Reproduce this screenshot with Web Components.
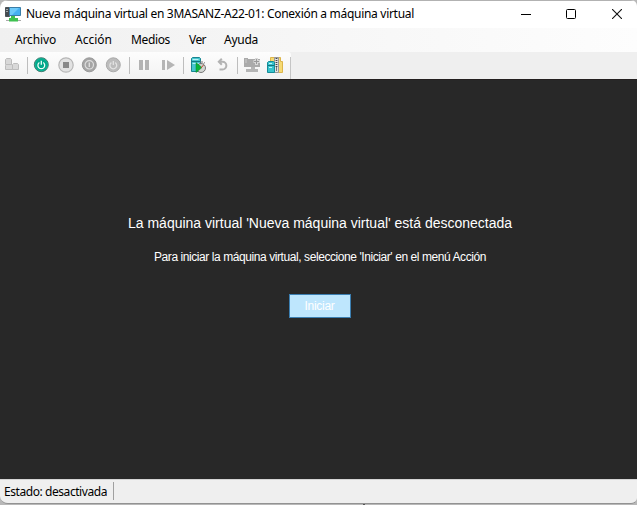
<!DOCTYPE html>
<html lang="es"><head><meta charset="utf-8"><title>Conexión a máquina virtual</title>
<style>html,body{margin:0;height:100%;overflow:hidden;background:#b5b5b5}</style></head><body>
<vm-window></vm-window>
<script>
const define=(name,html,ready)=>customElements.define(name,class extends HTMLElement{
 connectedCallback(){ if(!this.shadowRoot)this.attachShadow({mode:'open'}).innerHTML=html; if(ready)ready(this); }
});

/* A line of text spread evenly over the width given in its "w" attribute. */
define('fit-text','<style>:host{display:block;white-space:pre;flex:none}span{display:inline-block}</style><span><slot></slot></span>',el=>{
 const s=el.shadowRoot.querySelector('span'),w=+el.getAttribute('w'),n=el.textContent.length;
 s.style.letterSpacing='0';
 s.style.letterSpacing=((w-s.getBoundingClientRect().width)/n)+'px';
 el.style.width=w+'px';
});

const power='<path d="M6.1 5.3a3.4 3.4 0 1 0 3.8 0M8 3.6v4" fill="none" stroke="#S" stroke-width="1.3"/>';
const server='<path d="M1.5 1.5l1-1h7l1 1v13h-9z" fill="#45c5ce" stroke="#198591"/><path d="M2.5 2.5h6M2.5 6.5h7" stroke="#b5f2f4"/><path d="M2 4.5h8" stroke="#167984"/>';
const icons={
 keys:'<path d="M1.5 2.5l1-1h4l1 1v5h-6zM1.5 8.5l1-1h5l1 1v4h-7zM8.5 7.5l1-1h4l1 1v5h-6z" fill="#d8d8d8" stroke="#bcbcbc"/>',
 start:'<circle cx="8.3" cy="7.7" r="7" fill="#00a88a" stroke="#477b70"/><circle cx="8.3" cy="7.7" r="6" fill="none" stroke="#12b99a" stroke-width=".8"/><g transform="translate(.3 .2)">'+power.replace('#S','#f1fffb')+'</g>',
 off:'<circle cx="8" cy="8" r="7.2" fill="#e2e2e2" stroke="#b7b7b7" stroke-width="1.2"/><path d="M5 5h6v6H5z" fill="#888"/>',
 shut:'<circle cx="8.3" cy="7.8" r="7" fill="#a5a5a5" stroke="#999"/><circle cx="8.3" cy="7.8" r="4.2" fill="none" stroke="#dedede" stroke-width="1.2"/><path d="M8.3 5.6v4.5" stroke="#dedede" stroke-width="1.4"/>',
 save:'<circle cx="8.3" cy="7.8" r="7" fill="#bcbcbc" stroke="#aaa"/><g transform="translate(.3 .3)">'+power.replace('#S','#e3e3e3')+'</g>',
 pause:'<path d="M3 3h4v10H3zM9 3h4v10H9z" fill="#b3b3b3"/>',
 reset:'<path d="M2 3h3v10H2zM7 3l8 5-8 5z" fill="#b5b5b5"/>',
 check:server+'<circle cx="11" cy="11" r="4.5" fill="#d2d5d2" stroke="#777"/><path d="M10 5h3M13.5 6.5l1.5-1" stroke="#777"/><path d="M6 5.5l6 5-6 5z" fill="#08b43a" stroke="#08882c" stroke-width=".5"/><path d="M11 11l2.5-3" stroke="#bb4a2e"/>',
 revert:'<path d="M4.5 4.8H8.5a3.8 3.8 0 0 1 0 7.7H5.5M7.8 1.8l-3 3 3 3" fill="none" stroke="#b3b3b3" stroke-width="2"/>',
 enhanced:'<path d="M0 1h4v9H0zM4 2h12v8H4z" fill="#aaa"/><path d="M1 3h2M1 5h2" stroke="#ccc"/><path d="M9.5 4.5h6.5M12.5 1v7" stroke="#d8d8d8" stroke-width="3"/><path d="M10 4.5h5M12.5 2v5" stroke="#999"/><path d="M7 10h4v2h3v3H2v-3h5z" fill="#b5b5b5"/>',
 zip:'<path d="M3.5.5h5v14h-5zM11.5.5h2v4h2v11h-4z" fill="#f6da72" stroke="#dcb54c"/><path d="M7.5.5h4v15h-4z" fill="#e2e2e2" stroke="#999"/><path d="M9.5 1v9" stroke="#444" stroke-width="1.8" stroke-dasharray="1 1"/><path d="M9.5 10v4" stroke="#777"/><path d="M.5 5.5l1-1h5l1 1v10h-7z" fill="#38c4ce" stroke="#158b97"/><path d="M1 8.5h6" stroke="#12737e"/><path d="M2 6.5h3M2 10.5h3" stroke="#bff7f8"/>',
 app:'<path d="M.5 1.5h4v9h-4z" fill="#454b50" stroke="#4c5256"/><path d="M1 3.5h2M1 5.5h2" stroke="#a0a8ad"/><path d="M4.5 1.5h11v8h-11z" fill="#45b0f2" stroke="#3a7ea8"/><path d="M5 2h9L7 9H5z" fill="#6ecafa"/><path d="M6 10h4v2h3v3.5H4V12h2z" fill="#3fc151"/><path d="M1 14.5h3M13 14.5h3" stroke="#aaa"/>'
};
define('vm-icon','<style>:host{display:block;width:16px;height:16px;flex:none}svg{display:block}</style><svg width="16" height="16" viewBox="0 0 16 16"></svg>',el=>{el.shadowRoot.querySelector('svg').innerHTML=icons[el.getAttribute('name')]});

define('title-bar',`<style>:host{display:flex;height:28px;background:#fff;padding-left:5px;box-sizing:border-box;font:12px "Noto Sans",sans-serif;color:#000;border-top:1px solid #b2b2b2}
vm-icon{margin-top:5px}fit-text{margin-left:5px;line-height:17px;margin-top:4px}.b{margin-left:auto;display:flex;gap:36px;padding:8px 15px 0 0}svg{display:block}.b svg:first-child{margin-right:-1px}</style>
<vm-icon name="app"></vm-icon><fit-text w="388">Nueva máquina virtual en 3MASANZ-A22-01: Conexión a máquina virtual</fit-text>
<div class="b"><svg width="10" height="10"><path d="M0 5.5h10" stroke="#000"/></svg><svg width="10" height="10"><rect x=".5" y=".5" width="9" height="9" rx="1" fill="none" stroke="#000"/></svg><svg width="10" height="10"><path d="M0 0l10 10M10 0L0 10" stroke="#111" stroke-width="1.1"/></svg></div>`);

define('menu-bar',`<style>:host{display:flex;height:24px;gap:19px;padding-left:15px;box-sizing:border-box;background:linear-gradient(90deg,#f0f0f0,#fdfdfd);font:12px/24px "Noto Sans",sans-serif;color:#000}</style>
<fit-text w="41">Archivo</fit-text><fit-text w="37">Acción</fit-text><fit-text w="39">Medios</fit-text><fit-text w="17">Ver</fit-text><fit-text w="34" style="margin-left:-1px">Ayuda</fit-text>`);

define('tool-bar',`<style>:host{display:flex;height:27px;background:#efefef}.t{display:flex;width:291px;box-sizing:border-box;padding:5px 0 0 4px;background:linear-gradient(#fdfdfd,#f2f2f2);border-radius:0 3px 0 0}
i{width:1px;height:17px;background:#bdbdbd;margin:0 6px 0 7px;flex:none}.g7{margin-left:7px}.g8{margin-left:8px}.g9{margin-left:9px}i.end{height:22px;margin:0 0 0 7px;background:#c5c5c5}</style>
<div class="t"><vm-icon name="keys"></vm-icon><i></i><vm-icon name="start" style="margin-left:-1px"></vm-icon><vm-icon class="g9" name="off"></vm-icon><vm-icon class="g7" name="shut"></vm-icon><vm-icon class="g8" name="save"></vm-icon><i style="margin-left:8px"></i><vm-icon name="pause"></vm-icon><vm-icon class="g8" name="reset"></vm-icon><i></i><vm-icon name="check"></vm-icon><vm-icon class="g8" name="revert"></vm-icon><i></i><vm-icon name="enhanced"></vm-icon><vm-icon class="g7" name="zip"></vm-icon><i class="end"></i></div>`);

define('vm-screen',`<style>:host{display:flex;flex-direction:column;align-items:center;height:400px;box-sizing:border-box;background:#282828;border-top:1px solid #242020;padding:134px 0 0 3px;color:#fff;font-family:"Liberation Sans",Arial,sans-serif}
.h{font-size:14px;line-height:18px}.p{font-size:12px;line-height:16px;margin-top:17px}
button{display:flex;justify-content:center;align-items:center;width:62px;height:24px;margin:29px 1px 0 0;padding:0;box-sizing:border-box;border:1px solid #3c7fb1;background:#bee6fd;color:#fff;font:12px "Liberation Sans",Arial,sans-serif}</style>
<fit-text class="h" w="384">La máquina virtual 'Nueva máquina virtual' está desconectada</fit-text><fit-text class="p" w="332">Para iniciar la máquina virtual, seleccione 'Iniciar' en el menú Acción</fit-text><button><fit-text w="30">Iniciar</fit-text></button>`);

define('status-bar',`<style>:host{display:flex;height:24px;box-sizing:border-box;border-top:1px solid #d5d5d5;background:#efefef;padding-left:4px;font:12px/24px "Noto Sans",sans-serif;color:#000}i{width:1px;height:18px;margin:2px 0 0 6px;background:#a0a0a0}</style>
<fit-text w="103">Estado: desactivada</fit-text><i></i>`);

define('vm-window',`<style>:host{display:block;width:637px;height:505px;background:linear-gradient(90deg,transparent 363px,#555 363px,#555 365px,transparent 365px),#b8b8b8}
.w{height:504px;box-sizing:border-box;border-bottom:1px solid #929292;border-radius:8px 6px 6px 8px;overflow:hidden}</style>
<div class="w"><title-bar></title-bar><menu-bar></menu-bar><tool-bar></tool-bar><vm-screen></vm-screen><status-bar></status-bar></div>`);
</script></body></html>
